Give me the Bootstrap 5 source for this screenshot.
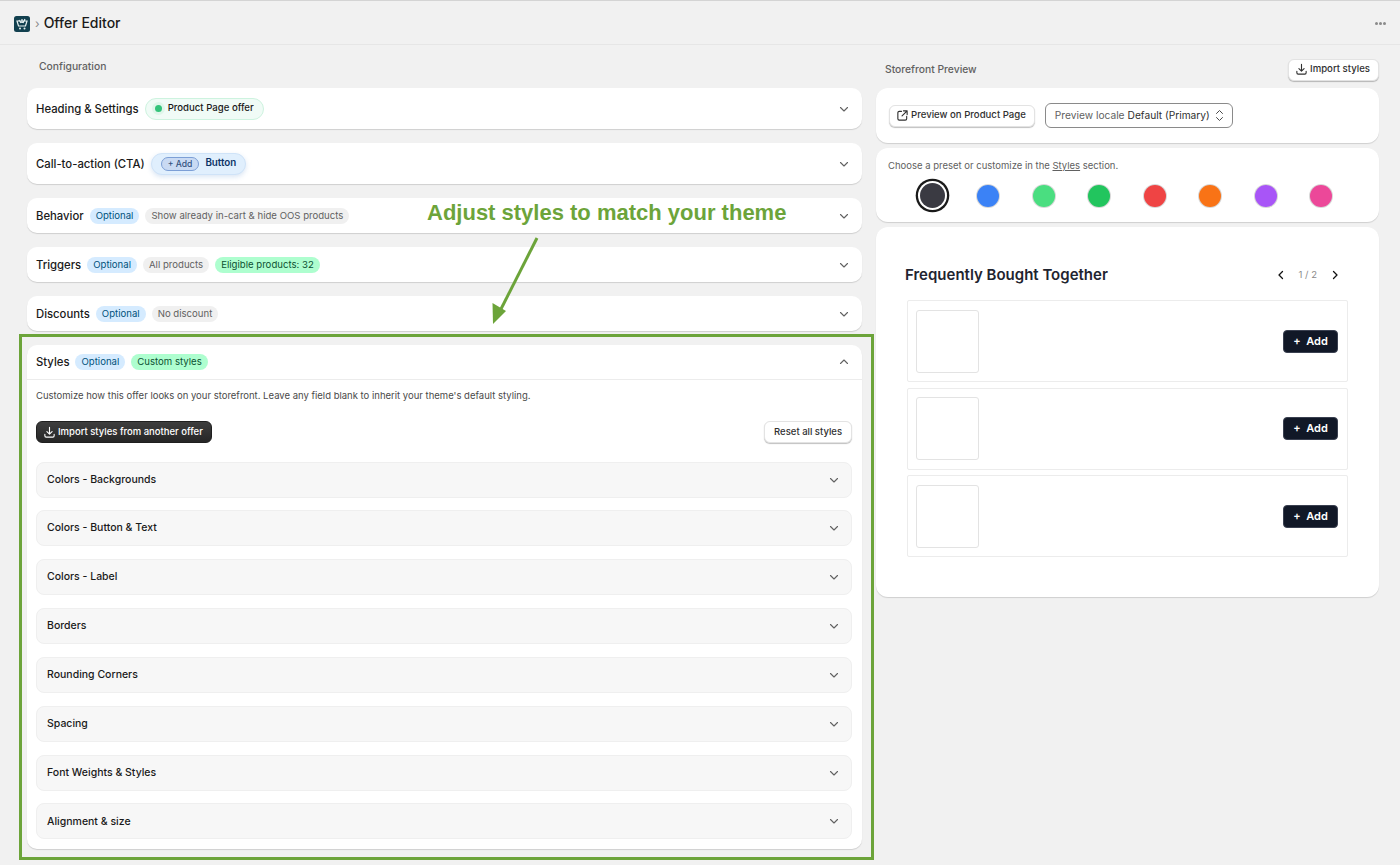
<!DOCTYPE html>
<html lang="en">
<head>
  <meta charset="UTF-8">
  <title>Offer Editor</title>
  <link href="https://cdn.jsdelivr.net/npm/bootstrap@5.3.5/dist/css/bootstrap.min.css" rel="stylesheet">
  <style>
    body { background: #f1f1f1; font-family: Inter, "Liberation Sans", sans-serif; font-size: 11px; color: #303030; width: 1400px; height: 865px; overflow: hidden; position: relative; }
    svg { display: block; flex: none; }
    .top-bar { height: 45px; border-top: 1px solid #d4d4d4; border-bottom: 1px solid #e6e6e6; padding: 2px 14px 0; }
    .top-bar h1 { font-size: 14px; font-weight: 500; margin: 0; color: #1a1a1a; }
    .crumb-sep { color: #8a8a8a; margin: 0 4px 0 5px; font-size: 12px; }
    .more-dots { gap: 1px; }
    .more-dots i { width: 3px; height: 3px; border-radius: 50%; background: #8a8a8a; }
    .page-wrap { padding: 0 21px 0 27px; gap: 14px; }
    .left-side { width: 835px; }
    .right-side { width: 503px; }
    .side-title { font-size: 10.3px; font-weight: 500; color: #616161; }
    .left-title { height: 43px; padding: 0 0 0 12px; }
    .right-title { height: 43px; padding: 6px 0 0 9px; }
    .panel { background: #fff; border-radius: 10px; box-shadow: 0 1px 1px rgba(0,0,0,.14); margin-bottom: 14px; }
    .panel-head { padding: 0 12px 0 9px; gap: 6px; }
    .head-tall { height: 41px; }
    .head-low { height: 35px; }
    .head-name { font-size: 11.3px; font-weight: 500; color: #1a1a1a; line-height: 16px; }
    .chev { margin-left: auto; color: #616161; }
    .pill { border-radius: 8px; height: 16px; padding: 0 6px; font-size: 9.6px; line-height: 16px; white-space: nowrap; }
    .pill-blue { background: #d5ebff; color: #00527c; }
    .pill-gray { background: #f0f0f0; color: #616161; }
    .pill-green { background: #aefecf; color: #0c5132; }
    .offer-tag { height: 22px; border: 1px solid #cdf3df; background: #f0fbf6; border-radius: 11px; padding: 0 9px 0 8px; gap: 5px; font-size: 9.6px; font-weight: 500; color: #1a1a1a; }
    .green-dot { width: 7px; height: 7px; border-radius: 50%; background: #34c37a; box-shadow: 0 0 0 3px #dff6ea; margin: 0 1px; }
    .cta-tag { height: 22px; border: 1px solid #cfe3f8; background: #e0effd; border-radius: 11px; padding: 0 9px; gap: 6px; box-shadow: 0 2px 5px rgba(70,130,200,.2); font-size: 9.8px; font-weight: 600; color: #0b3366; }
    .cta-add { height: 14px; line-height: 12px; padding: 0 6px; border: 1px solid #7c9fd6; border-radius: 7px; background: #c9daf3; font-size: 8.6px; font-weight: 500; color: #33527f; }
    .styles-head { height: 35px; border-bottom: 1px solid #ececec; }
    .styles-body { padding: 9px 10px 10px 9px; }
    .styles-note { font-size: 9.5px; color: #4a4a4a; line-height: 14px; margin-bottom: 18px; }
    .btn-plain { height: 22px; padding: 0 9px; font-size: 9.5px; font-weight: 500; color: #303030; background: #fff; border: 1px solid #e3e3e3; border-radius: 6px; box-shadow: 0 1px 1px rgba(0,0,0,.25); gap: 2px; }
    .btn-ico { padding: 0 8px 0 6px; font-size: 9.6px; }
    .btn-darkish { height: 22px; padding: 0 8px 0 6px; font-size: 9.5px; font-weight: 500; color: #fff; background: linear-gradient(#3e3e3e, #262626); border: 1px solid #1f1f1f; border-radius: 6px; gap: 2px; }
    .sub-row { height: 36px; background: #f7f7f7; border: 1px solid #efefef; border-radius: 8px; padding: 0 11px 0 10px; margin-top: 12.85px; font-size: 10.5px; font-weight: 500; color: #1a1a1a; }
    .sub-row:first-of-type { margin-top: 18.5px; }
    .right-side .panel { margin-bottom: 5px; border-radius: 12px; }
    .action-panel { height: 55px; padding: 0 13px; gap: 10px; }
    .locale-box { height: 25px; width: 188px; border: 1px solid #8a8a8a; border-radius: 6px; padding: 0 8px 0 9px; font-size: 10.2px; color: #303030; gap: 3px; white-space: nowrap; }
    .locale-box span:first-child { color: #616161; }
    .preset-panel { height: 74px; padding: 11px 12px 0; }
    .preset-note { font-size: 9.5px; color: #616161; line-height: 14px; }
    .preset-note u { text-underline-offset: 1px; }
    .swatch-row { width: 444px; margin: 6px 0 0 17px; }
    .swatch-cell { flex: 1 1 0; height: 33px; }
    .swatch { width: 22px; height: 22px; border-radius: 50%; box-shadow: 0 0 0 1px #d8d8d8; }
    .swatch-on { box-shadow: 0 0 0 2px #fff, 0 0 0 4.3px #1a1a1a; width: 25px; height: 25px; }
    .preview-panel { height: 370px; padding: 38px 29px 0 29px; }
    .preview-title { font-size: 15px; font-weight: 600; color: #1f2430; }
    .preview-top { height: 20px; margin-bottom: 15px; }
    .pager { color: #8a8a8a; font-size: 9.5px; gap: 12px; margin-right: 9px; }
    .pager svg { color: #111; }
    .product-row { height: 82px; border: 1px solid #ececec; border-radius: 2px; margin: 0 2px 5.5px 2px; padding: 0 9px 0 8px; }
    .product-pic { width: 63px; height: 63px; border: 1px solid #e3e3e3; border-radius: 3px; }
    .btn-add { height: 23px; width: 55px; background: #111827; color: #fff; font-size: 11px; font-weight: 600; border: 1px solid #3a4050; border-radius: 4px; padding: 0; }
    .mark-frame { position: absolute; left: 19px; top: 334px; width: 855px; height: 526px; border: 3px solid #6ca43a; pointer-events: none; }
    .mark-text { position: absolute; left: 427px; top: 199px; font-family: "Liberation Sans", Arial, sans-serif; font-size: 22px; font-weight: 700; color: #6ca43a; line-height: 28px; white-space: nowrap; }
    .mark-arrow { position: absolute; left: 485px; top: 230px; }
  </style>
</head>

<body>
  <svg width="0" height="0" class="position-absolute">
    <symbol id="chev-down" viewBox="0 0 12 12"><path d="M2.5 4.5 6 8l3.5-3.5" fill="none" stroke="currentColor" stroke-width="1.1" stroke-linecap="round" stroke-linejoin="round"/></symbol>
    <symbol id="chev-up" viewBox="0 0 12 12"><path d="M2.5 7.5 6 4l3.5 3.5" fill="none" stroke="currentColor" stroke-width="1.1" stroke-linecap="round" stroke-linejoin="round"/></symbol>
    <symbol id="import-ico" viewBox="0 0 14 14"><path d="M7 1.5v7M4.2 6 7 8.8 9.800 6M2 9v1.600c0 .8.6 1.400 1.400 1.400h7.200c.8 0 1.400-.6 1.400-1.400V9" fill="none" stroke="currentColor" stroke-width="1.2" stroke-linecap="round" stroke-linejoin="round"/></symbol>
  </svg>

  <div class="top-bar d-flex align-items-center">
    <svg width="16" height="16" viewBox="0 0 16 16"><rect width="16" height="16" rx="2.500" fill="#12404f"/><path d="M3 5h10l-1.500 5h-7zM5 4l2 3M11 3 9 7M8 3v4" fill="none" stroke="#e8f2f2" stroke-width="1.200"/><circle cx="6" cy="12.500" r="1" fill="#e8f2f2"/><circle cx="10.500" cy="12.500" r="1" fill="#e8f2f2"/></svg>
    <span class="crumb-sep">›</span>
    <h1>Offer Editor</h1>
    <div class="more-dots d-flex ms-auto"><i></i><i></i><i></i></div>
  </div>

  <div class="page-wrap d-flex align-items-start">
    <div class="left-side">
      <div class="left-title side-title d-flex align-items-center">Configuration</div>

      <div class="panel panel-head head-tall d-flex align-items-center">
        <span class="head-name">Heading &amp; Settings</span>
        <span class="offer-tag d-flex align-items-center"><i class="green-dot"></i>Product Page offer</span>
        <svg class="chev" width="12" height="12"><use href="#chev-down"/></svg>
      </div>

      <div class="panel panel-head head-tall d-flex align-items-center">
        <span class="head-name">Call-to-action (CTA)</span>
        <span class="cta-tag d-flex align-items-center"><span class="cta-add">+ Add</span>Button</span>
        <svg class="chev" width="12" height="12"><use href="#chev-down"/></svg>
      </div>

      <div class="panel panel-head head-low d-flex align-items-center">
        <span class="head-name">Behavior</span>
        <span class="pill pill-blue">Optional</span>
        <span class="pill pill-gray">Show already in-cart &amp; hide OOS products</span>
        <svg class="chev" width="12" height="12"><use href="#chev-down"/></svg>
      </div>

      <div class="panel panel-head head-low d-flex align-items-center">
        <span class="head-name">Triggers</span>
        <span class="pill pill-blue">Optional</span>
        <span class="pill pill-gray">All products</span>
        <span class="pill pill-green">Eligible products: 32</span>
        <svg class="chev" width="12" height="12"><use href="#chev-down"/></svg>
      </div>

      <div class="panel panel-head head-low d-flex align-items-center">
        <span class="head-name">Discounts</span>
        <span class="pill pill-blue">Optional</span>
        <span class="pill pill-gray">No discount</span>
        <svg class="chev" width="12" height="12"><use href="#chev-down"/></svg>
      </div>

      <div class="panel mb-0">
        <div class="panel-head styles-head d-flex align-items-center">
          <span class="head-name">Styles</span>
          <span class="pill pill-blue">Optional</span>
          <span class="pill pill-green">Custom styles</span>
          <svg class="chev" width="12" height="12"><use href="#chev-up"/></svg>
        </div>
        <div class="styles-body">
          <div class="styles-note">Customize how this offer looks on your storefront. Leave any field blank to inherit your theme's default styling.</div>
          <div class="d-flex justify-content-between align-items-center">
            <button class="btn-darkish d-flex align-items-center"><svg width="13" height="13"><use href="#import-ico"/></svg>Import styles from another offer</button>
            <button class="btn-plain">Reset all styles</button>
          </div>
          <div id="subRows"></div>
        </div>
      </div>
    </div>

    <div class="right-side">
      <div class="right-title side-title d-flex align-items-center justify-content-between">
        <span>Storefront Preview</span>
        <button class="btn-plain btn-ico d-flex align-items-center"><svg width="13" height="13"><use href="#import-ico"/></svg>Import styles</button>
      </div>

      <div class="panel action-panel d-flex align-items-center">
        <button class="btn-plain btn-ico d-flex align-items-center">
          <svg width="13" height="13" viewBox="0 0 14 14"><path d="M6 2.500H3.500c-.8 0-1.500.7-1.500 1.500v6.500c0 .8.7 1.500 1.500 1.500H10c.8 0 1.500-.7 1.500-1.500V8M8 2h4v4M12 2 6.500 7.500" fill="none" stroke="currentColor" stroke-width="1.200" stroke-linecap="round" stroke-linejoin="round"/></svg>
          Preview on Product Page
        </button>
        <div class="locale-box d-flex align-items-center">
          <span>Preview locale</span><span>Default (Primary)</span>
          <svg class="ms-auto" width="9" height="13" viewBox="0 0 9 13"><path d="M1.500 4.500 4.500 1.500l3 3M1.500 8.500l3 3 3-3" fill="none" stroke="#4a4a4a" stroke-width="1" stroke-linecap="round" stroke-linejoin="round"/></svg>
        </div>
      </div>

      <div class="panel preset-panel">
        <div class="preset-note">Choose a preset or customize in the <u>Styles</u> section.</div>
        <div class="swatch-row d-flex" id="swatches"></div>
      </div>

      <div class="panel preview-panel">
        <div class="preview-top d-flex align-items-center justify-content-between">
          <div class="preview-title">Frequently Bought Together</div>
          <div class="pager d-flex align-items-center">
            <svg width="12" height="12" viewBox="0 0 12 12"><path d="M7.500 2.500 4 6l3.500 3.500" fill="none" stroke="currentColor" stroke-width="1.300" stroke-linecap="round" stroke-linejoin="round"/></svg>
            <span>1 / 2</span>
            <svg width="12" height="12" viewBox="0 0 12 12"><path d="M4.500 2.500 8 6 4.500 9.500" fill="none" stroke="currentColor" stroke-width="1.300" stroke-linecap="round" stroke-linejoin="round"/></svg>
          </div>
        </div>
        <div id="productRows"></div>
      </div>
    </div>
  </div>

  <div class="mark-frame"></div>
  <div class="mark-text">Adjust styles to match your theme</div>
  <svg class="mark-arrow" width="60" height="96" viewBox="0 0 60 96"><path d="M52 8 15 81" stroke="#6ca43a" stroke-width="3" fill="none"/><path d="M8 94 7.500 73 21 81z" fill="#6ca43a"/></svg>

<script>
  let grupos = ["Colors - Backgrounds", "Colors - Button & Text", "Colors - Label", "Borders", "Rounding Corners", "Spacing", "Font Weights & Styles", "Alignment & size"];
  let cores = ["#3a3a42", "#3b82f6", "#4ade80", "#22c55e", "#ef4444", "#f97316", "#a855f7", "#ec4899"];

  document.getElementById("subRows").innerHTML = grupos.map((nome) => `
    <div class="sub-row d-flex align-items-center">
      <span>${nome.replace("&", "&amp;")}</span>
      <svg class="chev" width="12" height="12"><use href="#chev-down"/></svg>
    </div>`).join("");

  document.getElementById("swatches").innerHTML = cores.map((cor, index) => `
    <div class="swatch-cell d-flex align-items-center justify-content-center">
      <div class="swatch ${index === 0 ? "swatch-on" : ""}" style="background:${cor}"></div>
    </div>`).join("");

  document.getElementById("productRows").innerHTML = [1, 2, 3].map(() => `
    <div class="product-row d-flex align-items-center justify-content-between">
      <div class="product-pic"></div>
      <button class="btn-add">+&nbsp; Add</button>
    </div>`).join("");
</script>
<script src="https://cdn.jsdelivr.net/npm/bootstrap@5.3.5/dist/js/bootstrap.bundle.min.js"></script>
</body>
</html>
